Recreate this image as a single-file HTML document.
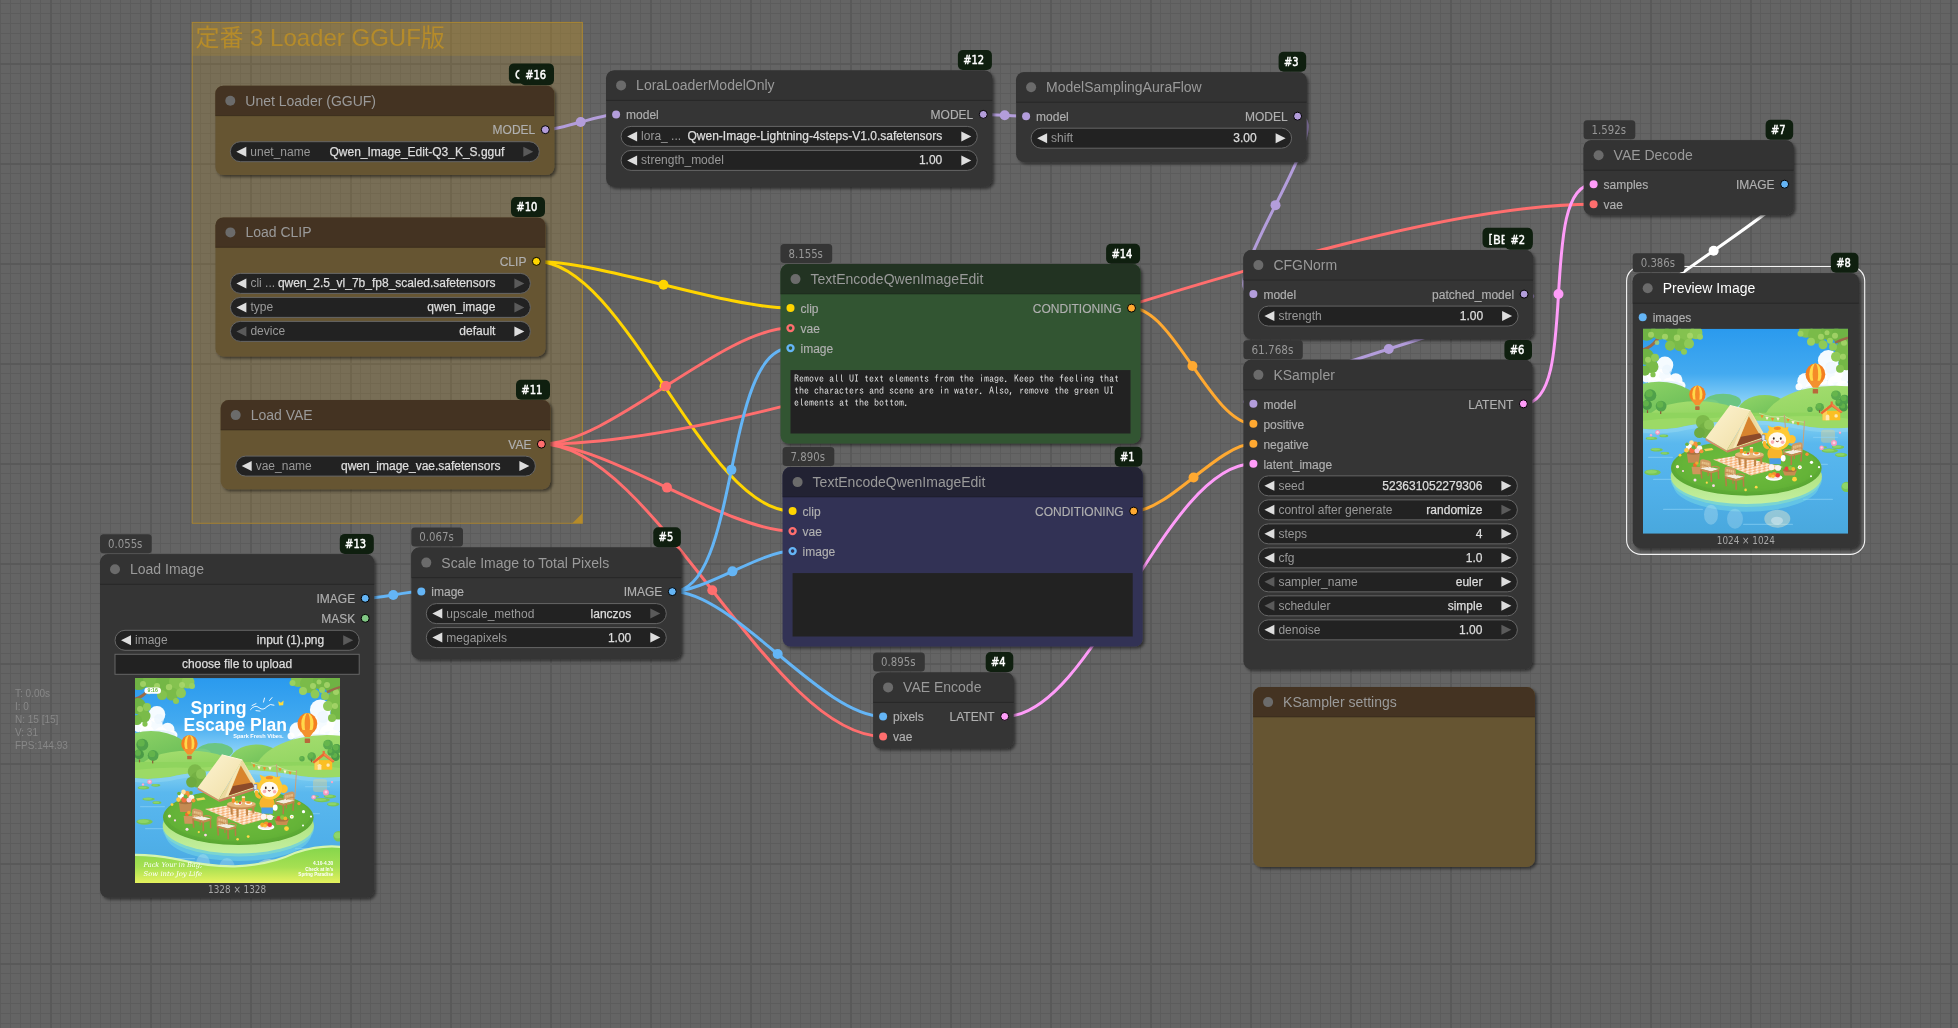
<!DOCTYPE html>
<html lang="ja"><head><meta charset="utf-8"><title>ComfyUI</title>
<style>
html,body{margin:0;padding:0;background:#636363;overflow:hidden}
svg{display:block;will-change:transform}
text{font-family:"Liberation Sans", sans-serif;font-size:12px}
.tt{font-size:14px}
.sl{fill:#b0b0b0;stroke:#b0b0b0;stroke-width:0.15px}
.sr{fill:#b0b0b0;text-anchor:end;stroke:#b0b0b0;stroke-width:0.15px}
.wl{fill:#999999}
.wv{fill:#dddddd;text-anchor:end;stroke:#dddddd;stroke-width:0.25px}
.wb{fill:#dddddd;text-anchor:middle;stroke:#dddddd;stroke-width:0.25px}
.ta{font-family:IPAGothic, "Liberation Mono", monospace;font-size:10px;fill:#dddddd;white-space:pre}
.tb{font-family:"DejaVu Sans Condensed", "DejaVu Sans", sans-serif;font-size:12px;fill:#979797}
.bd{font-family:"DejaVu Sans Condensed", "DejaVu Sans", sans-serif;font-size:12.5px;fill:#ffffff;stroke:#ffffff;stroke-width:0.5px}
.bd2{font-family:"DejaVu Sans Condensed", "DejaVu Sans", sans-serif;font-size:12.5px;fill:#ffffff;stroke:#ffffff;stroke-width:0.35px}
.cap{font-family:"DejaVu Sans Condensed", "DejaVu Sans", sans-serif;font-size:10px;fill:#a8a8a8;text-anchor:middle}
.st{font-size:10px;fill:#888888}
.gt{font-family:"Liberation Sans","Noto Sans CJK JP",sans-serif;font-size:24px;fill:#b58b2a}
</style></head><body>
<svg width="1958" height="1028" viewBox="0 0 1958 1028">
<defs>
<pattern id="grid" x="50" y="63" width="100" height="100" patternUnits="userSpaceOnUse">
<rect width="100" height="100" fill="#646464"/>
<path d="M10.5 0V100M20.5 0V100M30.5 0V100M40.5 0V100M50.5 0V100M60.5 0V100M70.5 0V100M80.5 0V100M90.5 0V100M0 10.5H100M0 20.5H100M0 30.5H100M0 40.5H100M0 50.5H100M0 60.5H100M0 70.5H100M0 80.5H100M0 90.5H100" stroke="#5c5c5c" stroke-width="1" fill="none"/>
<path d="M1 0V100M0 1H100" stroke="#595959" stroke-width="2" fill="none"/>
</pattern>
<filter id="sh" x="-5%" y="-5%" width="112%" height="115%"><feDropShadow dx="2" dy="2" stdDeviation="1.5" flood-color="#000" flood-opacity="0.5"/></filter>
<linearGradient id="gSky" x1="0" y1="0" x2="0" y2="1"><stop offset="0" stop-color="#2a9aee"/><stop offset="0.45" stop-color="#43aaf0"/><stop offset="0.75" stop-color="#8ed3f8"/><stop offset="1" stop-color="#b5e4fb"/></linearGradient>
<linearGradient id="gWater" x1="0" y1="0" x2="0" y2="1"><stop offset="0" stop-color="#86d2f2"/><stop offset="0.2" stop-color="#5ab8ee"/><stop offset="0.6" stop-color="#50b0ea"/><stop offset="1" stop-color="#49a8dd"/></linearGradient>
<linearGradient id="gHillA" x1="0" y1="0" x2="0.35" y2="1"><stop offset="0" stop-color="#a6de70"/><stop offset="0.6" stop-color="#8ed35f"/><stop offset="1" stop-color="#7cc856"/></linearGradient>
<linearGradient id="gHillB" x1="0" y1="0" x2="0.6" y2="1"><stop offset="0" stop-color="#93d668"/><stop offset="0.7" stop-color="#6fc05a"/><stop offset="1" stop-color="#62b752"/></linearGradient>
<radialGradient id="gGrass" cx="0.5" cy="0.45" r="0.6"><stop offset="0" stop-color="#7ac545"/><stop offset="0.7" stop-color="#64b238"/><stop offset="1" stop-color="#53a02f"/></radialGradient>
<linearGradient id="gRim" x1="0" y1="0" x2="0" y2="1"><stop offset="0" stop-color="#9fdc6a"/><stop offset="1" stop-color="#c4efa0"/></linearGradient>
<linearGradient id="gTent" x1="0" y1="0" x2="1" y2="1"><stop offset="0" stop-color="#fdf4d2"/><stop offset="1" stop-color="#f0dea6"/></linearGradient>
<linearGradient id="gWave" x1="0" y1="0" x2="0" y2="1"><stop offset="0" stop-color="#86d64c"/><stop offset="0.55" stop-color="#a6e052"/><stop offset="1" stop-color="#e6f25e"/></linearGradient>
<pattern id="pChk" width="5" height="5" patternUnits="userSpaceOnUse" patternTransform="rotate(18) skewX(-35)"><rect width="5" height="5" fill="#fdebd8"/><rect width="2.5" height="2.5" fill="#f6b47c"/><rect x="2.5" y="2.5" width="2.5" height="2.5" fill="#f6b47c"/></pattern>
<clipPath id="cScene"><rect width="205" height="205"/></clipPath>
<g id="scene" clip-path="url(#cScene)">
<rect width="205" height="100" fill="url(#gSky)"/>
<circle cx="21.9" cy="36.3" r="8.4" fill="#ffffff" opacity="0.95"/>
<circle cx="10" cy="44.9" r="6.8" fill="#ffffff" opacity="0.95"/>
<circle cx="32.7" cy="51.4" r="6.8" fill="#ffffff" opacity="0.95"/>
<circle cx="3.5" cy="48.2" r="5.6" fill="#ffffff" opacity="0.95"/>
<circle cx="20" cy="48" r="8" fill="#ffffff" opacity="0.95"/>
<circle cx="12" cy="54" r="7" fill="#ffffff" opacity="0.95"/>
<circle cx="26" cy="56" r="7" fill="#ffffff" opacity="0.95"/>
<circle cx="38" cy="57" r="4.5" fill="#ffffff" opacity="0.95"/>
<circle cx="185.4" cy="31.9" r="10.5" fill="#ffffff" opacity="0.95"/>
<circle cx="162.6" cy="52.5" r="8.3" fill="#ffffff" opacity="0.95"/>
<circle cx="199.4" cy="47.1" r="8" fill="#ffffff" opacity="0.95"/>
<circle cx="175.6" cy="50.3" r="9" fill="#ffffff" opacity="0.95"/>
<circle cx="190" cy="44" r="10" fill="#ffffff" opacity="0.95"/>
<circle cx="168" cy="60" r="6" fill="#ffffff" opacity="0.95"/>
<circle cx="184" cy="60" r="8" fill="#ffffff" opacity="0.95"/>
<circle cx="200" cy="60" r="8" fill="#ffffff" opacity="0.95"/>
<circle cx="156" cy="58" r="3.5" fill="#ffffff" opacity="0.95"/>
<circle cx="192" cy="54" r="7" fill="#ffffff" opacity="0.95"/>
<ellipse cx="22" cy="57" rx="18" ry="5" fill="#e2f1fd" opacity="0.8"/>
<ellipse cx="182" cy="62" rx="24" ry="6" fill="#e2f1fd" opacity="0.8"/>
<circle cx="24" cy="41" r="5" fill="#eaf5fe" opacity="0.7"/>
<circle cx="188" cy="39" r="6" fill="#eaf5fe" opacity="0.7"/>
<ellipse cx="80" cy="73" rx="18" ry="8" fill="#6cc582"/>
<ellipse cx="66" cy="75" rx="10" ry="4.5" fill="#78cc84"/>
<ellipse cx="16" cy="80" rx="42" ry="27" fill="url(#gHillB)"/>
<ellipse cx="121.5" cy="86" rx="28" ry="19.6" fill="url(#gHillB)"/>
<ellipse cx="192" cy="95" rx="72" ry="38" fill="url(#gHillA)"/>
<ellipse cx="54" cy="92" rx="50" ry="19.4" fill="url(#gHillA)"/>
<path d="M0 84H205V99Q180 101 160 97Q130 91 100 92Q60 93 35 99Q15 102 0 100Z" fill="#8fd45e"/>
<path d="M0 92Q30 88 60 90Q100 86 140 88Q180 86 205 90V99Q180 101 160 97Q130 91 100 92Q60 93 35 99Q15 102 0 100Z" fill="#a0dc6a" opacity="0.75"/>
<circle cx="7.3" cy="66.6" r="6" fill="#4fa04a"/>
<circle cx="6.1" cy="64.8" r="3.6" fill="#6bbb4c" opacity="0.7"/>
<circle cx="4" cy="76.3" r="4.9" fill="#4a9a46"/>
<circle cx="3.02" cy="74.83" r="2.94" fill="#6bbb4c" opacity="0.7"/>
<circle cx="18.1" cy="77.4" r="5.4" fill="#52a44c"/>
<circle cx="17.02" cy="75.78" r="3.24" fill="#6bbb4c" opacity="0.7"/>
<circle cx="193" cy="66.6" r="4.9" fill="#5aaa4e"/>
<circle cx="192.02" cy="65.13" r="2.94" fill="#6bbb4c" opacity="0.7"/>
<circle cx="201.6" cy="70.9" r="4.9" fill="#4fa04a"/>
<circle cx="200.62" cy="69.43" r="2.94" fill="#6bbb4c" opacity="0.7"/>
<circle cx="176.7" cy="78.5" r="4.3" fill="#5aaa4e"/>
<circle cx="175.84" cy="77.21" r="2.58" fill="#6bbb4c" opacity="0.7"/>
<circle cx="200.5" cy="78.5" r="4.3" fill="#4a9a46"/>
<circle cx="199.64" cy="77.21" r="2.58" fill="#6bbb4c" opacity="0.7"/>
<circle cx="167" cy="80.7" r="2.7" fill="#5aaa4e"/>
<circle cx="166.46" cy="79.89" r="1.62" fill="#6bbb4c" opacity="0.7"/>
<circle cx="196" cy="74" r="3.6" fill="#4fa04a"/>
<circle cx="195.28" cy="72.92" r="2.16" fill="#6bbb4c" opacity="0.7"/>
<rect x="17.1" y="82.5" width="1.2" height="2.8" fill="#8a5a35"/>
<rect x="3.9" y="81.5" width="1.2" height="2.8" fill="#8a5a35"/>
<rect x="175.9" y="81.3" width="1.2" height="2.8" fill="#8a5a35"/>
<path d="M179.6 82L197.2 82L197.2 91.6L179.6 91.6Z" fill="#fbbf24"/>
<path d="M179.6 82L184 78L184 91.6L179.6 91.6Z" fill="#fbd057"/>
<path d="M177.2 84L188.9 74.5L199.6 83L198 84.6L188.9 78L179 85.5Z" fill="#e96a32"/>
<path d="M188.9 74.5L199.6 83L197 83.5L188.9 77Z" fill="#f2854a"/>
<rect x="187.6" y="72.8" width="2.2" height="3" fill="#e7733a"/>
<path d="M182.7 91.6V87.2Q184.5 84.6 186.4 87.2V91.6Z" fill="#ffe9b4"/>
<rect x="191.5" y="85.5" width="3.2" height="3.2" rx="1.2" fill="#ffe9b4"/>
<g><ellipse cx="54.4" cy="65.6" rx="8.2" ry="8.7" fill="#f47f20"/><ellipse cx="54.4" cy="65.6" rx="5.08" ry="8.7" fill="#ffd84a"/><ellipse cx="54.4" cy="65.6" rx="2.3" ry="8.7" fill="#f58a28"/><path d="M48.25 70.82L60.55 70.82L56.45 76.47L52.35 76.47Z" fill="#f3912f"/><rect x="52.19" y="77.61" width="4.43" height="3.65" rx="0.6" fill="#b9683a"/></g>
<g><ellipse cx="172.4" cy="45.6" rx="9.9" ry="10.7" fill="#f47f20"/><ellipse cx="172.4" cy="45.6" rx="6.14" ry="10.7" fill="#ffd84a"/><ellipse cx="172.4" cy="45.6" rx="2.77" ry="10.7" fill="#f58a28"/><path d="M164.97 52.02L179.83 52.02L174.88 58.98L169.93 58.98Z" fill="#f3912f"/><rect x="169.73" y="60.37" width="5.35" height="4.49" rx="0.6" fill="#b9683a"/></g>
<path d="M0 100Q15 102 35 99Q60 93 100 92Q130 91 160 97Q180 101 205 99V205H0Z" fill="url(#gWater)"/>
<path d="M0 100Q15 102 35 99Q60 93 100 92Q130 91 160 97Q180 101 205 99V103Q180 105 160 101Q130 95 100 96Q60 97 35 103Q15 106 0 104Z" fill="#8fd6f2" opacity="0.6"/>
<rect x="178" y="101" width="14" height="13" rx="3" fill="#f3d27a" opacity="0.35"/>
<rect x="10" y="150" width="30" height="1.2" rx="0.6" fill="#8ed4f5" opacity="0.55"/>
<rect x="150" y="135" width="35" height="1.2" rx="0.6" fill="#8ed4f5" opacity="0.55"/>
<rect x="160" y="170" width="30" height="1.2" rx="0.6" fill="#8ed4f5" opacity="0.55"/>
<rect x="20" y="180" width="40" height="1.2" rx="0.6" fill="#8ed4f5" opacity="0.55"/>
<rect x="100" y="195" width="50" height="1.2" rx="0.6" fill="#8ed4f5" opacity="0.55"/>
<rect x="170" y="108" width="25" height="1.2" rx="0.6" fill="#8ed4f5" opacity="0.55"/>
<rect x="5" y="128" width="25" height="1.2" rx="0.6" fill="#8ed4f5" opacity="0.55"/>
<ellipse cx="9.5" cy="143.7" rx="8.2" ry="2.9" fill="#78c657"/>
<ellipse cx="8.27" cy="143.12" rx="5.74" ry="1.74" fill="#93d86b" opacity="0.8"/>
<ellipse cx="13.6" cy="121" rx="6.2" ry="1.7" fill="#78c657"/>
<ellipse cx="12.67" cy="120.66" rx="4.34" ry="1.02" fill="#93d86b" opacity="0.8"/>
<ellipse cx="21.9" cy="124.6" rx="4.5" ry="1.4" fill="#78c657"/>
<ellipse cx="21.22" cy="124.32" rx="3.15" ry="0.84" fill="#93d86b" opacity="0.8"/>
<ellipse cx="8.5" cy="109.7" rx="5.8" ry="1.7" fill="#78c657"/>
<ellipse cx="7.63" cy="109.36" rx="4.06" ry="1.02" fill="#93d86b" opacity="0.8"/>
<ellipse cx="20.8" cy="107.2" rx="4.5" ry="1.4" fill="#78c657"/>
<ellipse cx="20.12" cy="106.92" rx="3.15" ry="0.84" fill="#93d86b" opacity="0.8"/>
<ellipse cx="186.8" cy="122" rx="8.2" ry="2.1" fill="#78c657"/>
<ellipse cx="185.57" cy="121.58" rx="5.74" ry="1.26" fill="#93d86b" opacity="0.8"/>
<ellipse cx="198.2" cy="126.2" rx="6.2" ry="2.1" fill="#78c657"/>
<ellipse cx="197.27" cy="125.78" rx="4.34" ry="1.26" fill="#93d86b" opacity="0.8"/>
<ellipse cx="195" cy="118.4" rx="6.2" ry="1.9" fill="#78c657"/>
<ellipse cx="194.07" cy="118.02" rx="4.34" ry="1.14" fill="#93d86b" opacity="0.8"/>
<ellipse cx="203.5" cy="158.2" rx="5.2" ry="5.2" fill="#78c657"/>
<ellipse cx="202.72" cy="157.16" rx="3.64" ry="3.12" fill="#93d86b" opacity="0.8"/>
<ellipse cx="181" cy="118.5" rx="3" ry="1" fill="#78c657"/>
<ellipse cx="180.55" cy="118.3" rx="2.1" ry="0.6" fill="#93d86b" opacity="0.8"/>
<circle cx="14.6" cy="103.8" r="2.4" fill="#f49ac0"/>
<circle cx="14.6" cy="103.5" r="1.2" fill="#fbd0e2"/>
<circle cx="191" cy="114.3" r="3" fill="#f49ac0"/>
<circle cx="191" cy="114" r="1.5" fill="#fbd0e2"/>
<circle cx="178.6" cy="119.2" r="2.3" fill="#f49ac0"/>
<circle cx="178.6" cy="118.9" r="1.15" fill="#fbd0e2"/>
<circle cx="8" cy="106.5" r="1.3" fill="#f49ac0"/>
<circle cx="8" cy="106.2" r="0.65" fill="#fbd0e2"/>
<circle cx="197" cy="104" r="1.2" fill="#f49ac0"/>
<circle cx="197" cy="103.7" r="0.6" fill="#fbd0e2"/>
<ellipse cx="103.3" cy="156" rx="73" ry="27" fill="#7fe0e6" opacity="0.45"/>
<ellipse cx="103.3" cy="150.5" rx="75.6" ry="27.8" fill="#8fe3c0" opacity="0.55"/>
<ellipse cx="103.3" cy="147.6" rx="75.6" ry="27.8" fill="url(#gRim)"/>
<ellipse cx="103.3" cy="139.2" rx="75.3" ry="27.8" fill="url(#gGrass)"/>
<ellipse cx="103.3" cy="137.5" rx="72" ry="25.5" fill="#66b638" opacity="0.5"/>
<ellipse cx="134.3" cy="190" rx="13" ry="9" fill="#fdf1c8" opacity="0.4"/>
<ellipse cx="134" cy="192" rx="6" ry="4" fill="#ffffff" opacity="0.35"/>
<ellipse cx="68" cy="186" rx="7" ry="10" fill="#bfe6f2" opacity="0.35"/>
<ellipse cx="92" cy="190" rx="8" ry="10" fill="#bfe6f2" opacity="0.3"/>
<circle cx="60" cy="93.4" r="7.2" fill="#7cb94a"/>
<circle cx="63.5" cy="101.5" r="8.2" fill="#74b044"/>
<circle cx="56.5" cy="104" r="5.4" fill="#6daa40"/>
<circle cx="66" cy="96" r="5" fill="#8bc556"/>
<path d="M62.7 109.3L83.7 121.7L84.5 124L62.5 111.5Z" fill="#d9906a"/>
<path d="M83.7 121.7L122.9 108.7L123.5 110.8L84.5 124Z" fill="#c97f5c"/>
<path d="M86.8 76.7L107.4 81.9L83.7 121.7L62.7 109.3Z" fill="url(#gTent)"/>
<path d="M107.4 81.9L122.9 108.7L83.7 121.7Z" fill="#ecd9a0"/>
<path d="M105.8 87.5L118.5 109L93.5 117.5Z" fill="#d8842e"/>
<path d="M98 108L117 104.5L119.5 108.8L93.5 117.5Z" fill="#8c4a2a"/>
<path d="M107.4 81.9L101 98L93 118L90 119.5L98 98Z" fill="#f6e8b8"/>
<path d="M107.4 81.9L114 97L121 109L123 108.6L115 95Z" fill="#f3e2ac"/>
<path d="M86.8 76.7L107.4 81.9" stroke="#fff6d8" stroke-width="1" fill="none"/>
<path d="M116 84.5Q129 90 141.5 87.5Q150 93 161.2 93.5" stroke="#efe6cf" stroke-width="0.5" fill="none"/>
<path d="M141.3 86L142.5 100M161.5 92L159.8 119" stroke="#c9a27a" stroke-width="1" fill="none"/>
<path d="M117.4 86.2L120.6 86.5L119 89.8Z" fill="#f28a2e"/>
<path d="M122.4 88L125.6 88.3L124 91.6Z" fill="#fff4dc"/>
<path d="M127.9 89L131.1 89.3L129.5 92.6Z" fill="#f28a2e"/>
<path d="M133.4 88.8L136.6 89.1L135 92.4Z" fill="#fff4dc"/>
<path d="M143.4 90L146.6 90.3L145 93.6Z" fill="#f28a2e"/>
<path d="M148.4 92.2L151.6 92.5L150 95.8Z" fill="#fff4dc"/>
<path d="M153.4 93.4L156.6 93.7L155 97Z" fill="#f28a2e"/>
<path d="M43.8 124.5L57 124.5L55.8 134L45.2 134Z" fill="#c48a52"/>
<ellipse cx="50.4" cy="124.5" rx="6.6" ry="1.6" fill="#a8733f"/>
<circle cx="46" cy="118" r="3" fill="#ffffff"/>
<circle cx="52" cy="116" r="3.2" fill="#f7923a"/>
<circle cx="56.5" cy="119.5" r="2.8" fill="#fff6e0"/>
<circle cx="49" cy="121.5" r="2.8" fill="#f36f3f"/>
<circle cx="54" cy="122" r="2.5" fill="#ffd2e0"/>
<circle cx="43.5" cy="121.5" r="2.3" fill="#ffc94a"/>
<circle cx="48.5" cy="113.8" r="2.3" fill="#ffe2a0"/>
<circle cx="58.5" cy="122.5" r="2" fill="#f7923a"/>
<circle cx="50.5" cy="118.5" r="2" fill="#6bb23e"/>
<circle cx="44" cy="115.5" r="1.8" fill="#6bb23e"/>
<circle cx="56" cy="114.8" r="1.8" fill="#6bb23e"/>
<path d="M48.6 138L59.4 138L58.6 145.6L49.6 145.6Z" fill="#cf965c"/>
<circle cx="52" cy="136.2" r="2" fill="#f26a2e"/>
<circle cx="55.5" cy="135.8" r="2" fill="#7cc043"/>
<circle cx="53.8" cy="134.4" r="1.7" fill="#f6a72e"/>
<path d="M61 120.3L69 119.2L70.5 121.3L62.5 122.6Z" fill="#f7d45a"/>
<path d="M70 130.9L94 127.1L140 138.4L108 146.9Z" fill="url(#pChk)"/>
<g transform="translate(160 113.2) scale(-1 1)"><path d="M0.5 3Q0.5 0 3.5 0.3L9 1.6Q11.5 2.2 11.5 5V12.5L0.5 9.5Z" fill="#cf9a62"/><path d="M2.2 2.6L9.8 4.2V11L2.2 8.8Z" fill="#e8c48c"/><path d="M4.2 3V9.4M6.2 3.4V10M8.2 3.9V10.5M2.2 5L9.8 6.8M2.2 7L9.8 9" stroke="#cf9a62" stroke-width="0.5" fill="none"/><path d="M0.5 9.5L11.5 12.5L19.5 10.2L9 7.8Z" fill="#f4ece0"/><path d="M0.5 9.5L11.5 12.5L19.5 10.2V12.2L11.5 14.6L0.5 11.5Z" fill="#c48a50"/><path d="M0.5 6.5Q3 5 9 8.2" stroke="#c48a50" stroke-width="1" fill="none"/><path d="M11.5 8.5Q15 6.2 19.5 8.6V10.4" stroke="#c48a50" stroke-width="1.1" fill="none"/><path d="M0.7 11H2.3L2.8 19.5H1.3ZM10.7 14H12.4L12.6 23H11ZM18 12H19.5L19.8 20H18.3ZM8 12.8H9.2V17H8Z" fill="#b77c45"/></g>
<g transform="translate(56.6 130.2) scale(1 1)"><path d="M0.5 3Q0.5 0 3.5 0.3L9 1.6Q11.5 2.2 11.5 5V12.5L0.5 9.5Z" fill="#cf9a62"/><path d="M2.2 2.6L9.8 4.2V11L2.2 8.8Z" fill="#e8c48c"/><path d="M4.2 3V9.4M6.2 3.4V10M8.2 3.9V10.5M2.2 5L9.8 6.8M2.2 7L9.8 9" stroke="#cf9a62" stroke-width="0.5" fill="none"/><path d="M0.5 9.5L11.5 12.5L19.5 10.2L9 7.8Z" fill="#f4ece0"/><path d="M0.5 9.5L11.5 12.5L19.5 10.2V12.2L11.5 14.6L0.5 11.5Z" fill="#c48a50"/><path d="M0.5 6.5Q3 5 9 8.2" stroke="#c48a50" stroke-width="1" fill="none"/><path d="M11.5 8.5Q15 6.2 19.5 8.6V10.4" stroke="#c48a50" stroke-width="1.1" fill="none"/><path d="M0.7 11H2.3L2.8 19.5H1.3ZM10.7 14H12.4L12.6 23H11ZM18 12H19.5L19.8 20H18.3ZM8 12.8H9.2V17H8Z" fill="#b77c45"/></g>
<g transform="translate(81.2 137.6) scale(1.02 1.02)"><path d="M0.5 3Q0.5 0 3.5 0.3L9 1.6Q11.5 2.2 11.5 5V12.5L0.5 9.5Z" fill="#cf9a62"/><path d="M2.2 2.6L9.8 4.2V11L2.2 8.8Z" fill="#e8c48c"/><path d="M4.2 3V9.4M6.2 3.4V10M8.2 3.9V10.5M2.2 5L9.8 6.8M2.2 7L9.8 9" stroke="#cf9a62" stroke-width="0.5" fill="none"/><path d="M0.5 9.5L11.5 12.5L19.5 10.2L9 7.8Z" fill="#f4ece0"/><path d="M0.5 9.5L11.5 12.5L19.5 10.2V12.2L11.5 14.6L0.5 11.5Z" fill="#c48a50"/><path d="M0.5 6.5Q3 5 9 8.2" stroke="#c48a50" stroke-width="1" fill="none"/><path d="M11.5 8.5Q15 6.2 19.5 8.6V10.4" stroke="#c48a50" stroke-width="1.1" fill="none"/><path d="M0.7 11H2.3L2.8 19.5H1.3ZM10.7 14H12.4L12.6 23H11ZM18 12H19.5L19.8 20H18.3ZM8 12.8H9.2V17H8Z" fill="#b77c45"/></g>
<path d="M95.2 128.5H97.4L97.8 136.5H95.8ZM101.4 130H103.6L103.6 139.2H101.6ZM117 128.5H119.2L119.4 135.3H117.4ZM111 130H113V137.4H111.2Z" fill="#c28446"/>
<ellipse cx="106.4" cy="127.6" rx="14.4" ry="3.6" fill="#c78b4e"/>
<ellipse cx="106.4" cy="126" rx="14.4" ry="3.3" fill="#e6b67a"/>
<rect x="96.8" y="118.8" width="3.3" height="5.8" rx="0.8" fill="#f58f2c"/><rect x="96.8" y="118.8" width="3.3" height="1.6" rx="0.6" fill="#ffe8c8"/><rect x="106.8" y="118.2" width="3.3" height="5.8" rx="0.8" fill="#f7a13a"/><rect x="106.8" y="118.2" width="3.3" height="1.6" rx="0.6" fill="#ffe8c8"/>
<ellipse cx="103" cy="125.2" rx="3.8" ry="1.5" fill="#ffffff"/>
<circle cx="102" cy="123.8" r="1.5" fill="#f2b62e"/>
<circle cx="104.2" cy="123.6" r="1.5" fill="#8bc540"/>
<circle cx="105" cy="124.8" r="1.1" fill="#e8453a"/>
<ellipse cx="113.5" cy="125.4" rx="3.6" ry="1.4" fill="#ffffff"/>
<ellipse cx="113.5" cy="124.5" rx="2.4" ry="1.2" fill="#f58f2c"/>
<path d="M124.5 96.5L127.2 104L133 100.2Z" fill="#ffc832"/>
<path d="M145.5 98L137.5 100.5L143.5 105.5Z" fill="#ffc832"/>
<circle cx="148.6" cy="110.6" r="4.2" fill="#ffc22e"/>
<circle cx="122.2" cy="107.5" r="3.4" fill="#ffc22e"/>
<ellipse cx="132" cy="125.2" rx="7.6" ry="8" fill="#f9b42c"/>
<path d="M126.3 129.5L138.2 129.5L137.8 135.6L126.6 135.6Z" fill="#4b9ee2"/>
<ellipse cx="128.6" cy="138.6" rx="2.8" ry="3" fill="#fbf3ee"/>
<ellipse cx="135" cy="139.2" rx="3" ry="2.8" fill="#fbf3ee"/>
<ellipse cx="140.2" cy="129.5" rx="2.4" ry="3.2" fill="#ffffff"/>
<circle cx="135.3" cy="109.3" r="12" fill="#ffca36"/>
<ellipse cx="134.3" cy="111.2" rx="8.9" ry="7.6" fill="#fffaf2"/>
<circle cx="129.5" cy="113.4" r="1.8" fill="#f9a0a8" opacity="0.85"/>
<circle cx="139.6" cy="113.6" r="1.8" fill="#f9a0a8" opacity="0.85"/>
<ellipse cx="130.8" cy="109.8" rx="0.9" ry="1.3" fill="#3b2a22"/>
<ellipse cx="137.8" cy="109.9" rx="0.9" ry="1.3" fill="#3b2a22"/>
<path d="M132.8 112.2Q134.3 114 135.8 112.2" stroke="#5a2f22" stroke-width="0.6" fill="#e8645a"/>
<ellipse cx="134.4" cy="99.6" rx="3.6" ry="1.6" fill="#f58a28"/>
<rect x="118.6" y="105.8" width="3.6" height="6.4" rx="0.8" fill="#6b7fa8"/><rect x="119.2" y="106.6" width="2.4" height="4.6" fill="#dfe8f5"/>
<circle cx="121.5" cy="113.5" r="2.2" fill="#fffaf2"/>
<path d="M124.5 119Q121 118 121.5 114" stroke="#f9b42c" stroke-width="3.2" fill="none" stroke-linecap="round"/>
<ellipse cx="131" cy="148.8" rx="8.4" ry="3.2" fill="#ffffff"/>
<ellipse cx="131" cy="148.3" rx="6.6" ry="2.2" fill="#f1e7e2"/>
<circle cx="127.5" cy="146.6" r="2.3" fill="#f7a928"/>
<circle cx="131.2" cy="145.8" r="2.5" fill="#f58f2c"/>
<circle cx="134.8" cy="146.6" r="2.2" fill="#ea3f3a"/>
<circle cx="130" cy="147.6" r="1.8" fill="#fbc13a"/>
<path d="M139.6 141.5L153.8 141.5L151.8 146.8L141.6 146.8Z" fill="#c98d50"/>
<ellipse cx="146.7" cy="141.5" rx="7.1" ry="1.9" fill="#a8733f"/>
<circle cx="143.6" cy="140" r="2.1" fill="#e8453a"/>
<circle cx="147.3" cy="139.4" r="2.2" fill="#8cc63f"/>
<circle cx="150.3" cy="140.3" r="1.9" fill="#f2b52e"/>
<circle cx="156.8" cy="138.6" r="2" fill="#ffffff"/>
<circle cx="151.5" cy="150.5" r="2.4" fill="#ffd43a"/>
<circle cx="34.5" cy="138" r="1.6" fill="#fff1d8"/>
<circle cx="52" cy="151.2" r="1.5" fill="#ffe1ee"/>
<circle cx="70.5" cy="157" r="1.4" fill="#ffd6ea"/>
<circle cx="102.6" cy="161.2" r="1.3" fill="#ffd84a"/>
<circle cx="113.2" cy="158.5" r="1.4" fill="#ffd84a"/>
<circle cx="168.5" cy="133.6" r="1.6" fill="#ffffff"/>
<circle cx="37" cy="126.5" r="1.4" fill="#ffd43a"/>
<circle cx="164" cy="125.5" r="1.7" fill="#f7923a"/>
<circle cx="176" cy="138.5" r="1.1" fill="#ffffff"/>
<circle cx="40" cy="142.3" r="1.1" fill="#ffd6ea"/>
<circle cx="63.8" cy="154" r="1.1" fill="#ffd84a"/>
<circle cx="168" cy="147.5" r="1" fill="#fff"/>
<circle cx="156.8" cy="138.6" r="0.8" fill="#ffd43a"/>
<path d="M0 21Q8 19 14 11Q17 6 22 3" stroke="#9a6a48" stroke-width="3" fill="none"/>
<circle cx="4" cy="3" r="9" fill="#6fb344"/>
<circle cx="17" cy="2" r="9" fill="#7abb49"/>
<circle cx="30" cy="5" r="9.5" fill="#74b746"/>
<circle cx="43" cy="4" r="9" fill="#84c24f"/>
<circle cx="53" cy="4" r="6.5" fill="#8fca57"/>
<circle cx="37" cy="16" r="6.5" fill="#7abb49"/>
<circle cx="46" cy="15" r="5" fill="#8fca57"/>
<circle cx="27" cy="17" r="5" fill="#84c24f"/>
<circle cx="57" cy="8" r="3" fill="#9ad160"/>
<circle cx="41" cy="23" r="3" fill="#8fca57"/>
<circle cx="3" cy="28" r="8" fill="#6fb344"/>
<circle cx="9" cy="38" r="6.5" fill="#7abb49"/>
<circle cx="2" cy="42" r="5" fill="#74b746"/>
<circle cx="12" cy="29" r="4" fill="#8fca57"/>
<circle cx="10" cy="46" r="2.6" fill="#84c24f"/>
<circle cx="163" cy="2" r="7" fill="#84c24f"/>
<circle cx="174" cy="6" r="9" fill="#7abb49"/>
<circle cx="187" cy="3" r="9" fill="#74b746"/>
<circle cx="199" cy="6" r="10" fill="#6fb344"/>
<circle cx="168" cy="13" r="4" fill="#9ad160"/>
<circle cx="180" cy="16" r="4.5" fill="#8fca57"/>
<circle cx="157.5" cy="5" r="3" fill="#9ad160"/>
<circle cx="201" cy="22" r="9" fill="#7abb49"/>
<circle cx="203" cy="34" r="7.5" fill="#74b746"/>
<circle cx="193" cy="28" r="5" fill="#8fca57"/>
<circle cx="197" cy="40" r="4" fill="#84c24f"/>
<circle cx="190" cy="18" r="4" fill="#8fca57"/>
<circle cx="187" cy="12" r="3" fill="#9ad160"/>
<circle cx="8" cy="6" r="3" fill="#add96f" opacity="0.75"/>
<circle cx="22" cy="8" r="3" fill="#add96f" opacity="0.75"/>
<circle cx="34" cy="9" r="3.2" fill="#add96f" opacity="0.75"/>
<circle cx="47" cy="7" r="3" fill="#add96f" opacity="0.75"/>
<circle cx="14" cy="14" r="2.4" fill="#add96f" opacity="0.75"/>
<circle cx="5" cy="31" r="3" fill="#add96f" opacity="0.75"/>
<circle cx="178" cy="8" r="3" fill="#add96f" opacity="0.75"/>
<circle cx="192" cy="7" r="3" fill="#add96f" opacity="0.75"/>
<circle cx="201" cy="14" r="3" fill="#add96f" opacity="0.75"/>
<circle cx="200" cy="28" r="3" fill="#add96f" opacity="0.75"/>
<circle cx="184" cy="4" r="2.5" fill="#add96f" opacity="0.75"/>
<path d="M205 9Q198 11 192 14" stroke="#9a6a48" stroke-width="2.4" fill="none"/>
</g>
</defs>
<rect width="1958" height="1028" fill="url(#grid)"/>

<rect x="192.2" y="22.4" width="390.2" height="500.9" fill="#b58b2a" fill-opacity="0.25"/>
<rect x="192.2" y="22.4" width="390.2" height="33.4" fill="#b58b2a" fill-opacity="0.25"/>
<rect x="192.2" y="22.4" width="390.2" height="500.9" fill="none" stroke="#b58b2a" stroke-width="1" stroke-opacity="0.8"/>
<path d="M582.4 523.3h-10l10 -10z" fill="#b58b2a"/>
<text x="195.4" y="46.4" class="gt">定番 3 Loader GGUF版</text>
<path d="M545.3 129.7C563.41 129.7 597.99 114.4 616.1 114.4" fill="none" stroke="#B39DDB" stroke-width="3"/>
<circle cx="580.7" cy="122.05" r="5" fill="#B39DDB"/>
<path d="M983.3 114.4C994.01 114.4 1015.39 116.2 1026.1 116.2" fill="none" stroke="#B39DDB" stroke-width="3"/>
<circle cx="1004.7" cy="115.3" r="5" fill="#B39DDB"/>
<path d="M1297.6 116.2C1343.43 116.2 1207.57 294.1 1253.4 294.1" fill="none" stroke="#B39DDB" stroke-width="3"/>
<circle cx="1275.5" cy="205.15" r="5" fill="#B39DDB"/>
<path d="M1524.1 294.1C1597.13 294.1 1180.37 403.85 1253.4 403.85" fill="none" stroke="#B39DDB" stroke-width="3"/>
<circle cx="1388.75" cy="348.98" r="5" fill="#B39DDB"/>
<path d="M536.4 261.4C600.99 261.4 725.91 308.1 790.5 308.1" fill="none" stroke="#FFD500" stroke-width="3"/>
<circle cx="663.45" cy="284.75" r="5" fill="#FFD500"/>
<path d="M536.4 261.4C625.84 261.4 703.16 511.1 792.6 511.1" fill="none" stroke="#FFD500" stroke-width="3"/>
<circle cx="664.5" cy="386.25" r="5" fill="#FFD500"/>
<path d="M541.4 444.1C610.1 444.1 721.8 328.1 790.5 328.1" fill="none" stroke="#FF6E6E" stroke-width="3"/>
<circle cx="665.95" cy="386.1" r="5" fill="#FF6E6E"/>
<path d="M541.4 444.1C607.86 444.1 726.14 531.1 792.6 531.1" fill="none" stroke="#FF6E6E" stroke-width="3"/>
<circle cx="667" cy="487.6" r="5" fill="#FF6E6E"/>
<path d="M541.4 444.1C653.82 444.1 770.68 736.4 883.1 736.4" fill="none" stroke="#FF6E6E" stroke-width="3"/>
<circle cx="712.25" cy="590.25" r="5" fill="#FF6E6E"/>
<path d="M541.4 444.1C811.2 444.1 1323.8 204.2 1593.6 204.2" fill="none" stroke="#FF6E6E" stroke-width="3"/>
<circle cx="1067.5" cy="324.15" r="5" fill="#FF6E6E"/>
<path d="M365.2 598.3C379.32 598.3 407.18 591.6 421.3 591.6" fill="none" stroke="#64B5F6" stroke-width="3"/>
<circle cx="393.25" cy="594.95" r="5" fill="#64B5F6"/>
<path d="M672.3 591.6C739.97 591.6 722.83 348.1 790.5 348.1" fill="none" stroke="#64B5F6" stroke-width="3"/>
<circle cx="731.4" cy="469.85" r="5" fill="#64B5F6"/>
<path d="M672.3 591.6C704.03 591.6 760.87 551.1 792.6 551.1" fill="none" stroke="#64B5F6" stroke-width="3"/>
<circle cx="732.45" cy="571.35" r="5" fill="#64B5F6"/>
<path d="M672.3 591.6C733.54 591.6 821.86 716.4 883.1 716.4" fill="none" stroke="#64B5F6" stroke-width="3"/>
<circle cx="777.7" cy="654" r="5" fill="#64B5F6"/>
<path d="M1131.5 308.1C1173.53 308.1 1211.37 423.85 1253.4 423.85" fill="none" stroke="#FFA931" stroke-width="3"/>
<circle cx="1192.45" cy="365.98" r="5" fill="#FFA931"/>
<path d="M1133.7 511.1C1168.02 511.1 1219.08 443.85 1253.4 443.85" fill="none" stroke="#FFA931" stroke-width="3"/>
<circle cx="1193.55" cy="477.48" r="5" fill="#FFA931"/>
<path d="M1004.7 716.4C1093.31 716.4 1164.79 463.85 1253.4 463.85" fill="none" stroke="#FF9CF9" stroke-width="3"/>
<circle cx="1129.05" cy="590.12" r="5" fill="#FF9CF9"/>
<path d="M1523.4 403.85C1581.05 403.85 1535.95 184.2 1593.6 184.2" fill="none" stroke="#FF9CF9" stroke-width="3"/>
<circle cx="1558.5" cy="294.02" r="5" fill="#FF9CF9"/>
<path d="M1784.6 184.2C1833.22 184.2 1594.08 317.2 1642.7 317.2" fill="none" stroke="#ffffff" stroke-width="3"/>
<circle cx="1713.65" cy="250.7" r="5" fill="#ffffff"/>
<g>
<path d="M223.3 85.7H546.3A8 8 0 0 1 554.3 93.7V167.1A8 8 0 0 1 546.3 175.1H223.3A8 8 0 0 1 215.3 167.1V93.7A8 8 0 0 1 223.3 85.7Z" fill="#665533" filter="url(#sh)"/>
<path d="M223.3 85.7H546.3A8 8 0 0 1 554.3 93.7V115.7H215.3V93.7A8 8 0 0 1 223.3 85.7Z" fill="#443322"/>
<rect x="215.3" y="115.1" width="339" height="1.2" fill="#000" fill-opacity="0.2"/>
<circle cx="230.3" cy="100.7" r="5" fill="#6b6b6b"/>
<text x="245.3" y="105.7" class="tt" fill="#9a9a9a">Unet Loader (GGUF)</text>
<circle cx="545.3" cy="129.7" r="4" fill="#B39DDB" stroke="#000" stroke-width="1"/>
<text x="535.3" y="134.2" class="sr">MODEL</text>
<rect x="230.3" y="141.7" width="309" height="20" rx="10" fill="#222222" stroke="#666666" stroke-width="1"/>
<path d="M246.3 146.7L236.3 151.7L246.3 156.7Z" fill="#dddddd"/>
<path d="M523.3 146.7L533.3 151.7L523.3 156.7Z" fill="#5a5a5a"/>
<text x="250.3" y="155.7" class="wl">unet_name</text>
<text x="504.3" y="155.7" class="wv">Qwen_Image_Edit-Q3_K_S.gguf</text>
<rect x="508.9" y="63.4" width="45" height="20" rx="5" fill="#0f1f0f"/>
<clipPath id="cb16"><rect x="508.9" y="62.7" width="10.5" height="22"/></clipPath>
<text x="514.9" y="79.1" class="bd2" clip-path="url(#cb16)" textLength="32.5" lengthAdjust="spacingAndGlyphs">GGUF</text>
<rect x="519.9" y="65.3" width="34" height="20" rx="5" fill="#0f1f0f"/>
<text x="525.2" y="79.3" class="bd" textLength="21" lengthAdjust="spacingAndGlyphs">#16</text>
</g>
<g>
<path d="M223.4 217.4H537.4A8 8 0 0 1 545.4 225.4V348.4A8 8 0 0 1 537.4 356.4H223.4A8 8 0 0 1 215.4 348.4V225.4A8 8 0 0 1 223.4 217.4Z" fill="#665533" filter="url(#sh)"/>
<path d="M223.4 217.4H537.4A8 8 0 0 1 545.4 225.4V247.4H215.4V225.4A8 8 0 0 1 223.4 217.4Z" fill="#443322"/>
<rect x="215.4" y="246.8" width="330" height="1.2" fill="#000" fill-opacity="0.2"/>
<circle cx="230.4" cy="232.4" r="5" fill="#6b6b6b"/>
<text x="245.4" y="237.4" class="tt" fill="#9a9a9a">Load CLIP</text>
<circle cx="536.4" cy="261.4" r="4" fill="#FFD500" stroke="#000" stroke-width="1"/>
<text x="526.4" y="265.9" class="sr">CLIP</text>
<rect x="230.4" y="273.4" width="300" height="20" rx="10" fill="#222222" stroke="#666666" stroke-width="1"/>
<path d="M246.4 278.4L236.4 283.4L246.4 288.4Z" fill="#dddddd"/>
<path d="M514.4 278.4L524.4 283.4L514.4 288.4Z" fill="#5a5a5a"/>
<text x="250.4" y="287.4" class="wl">cli ...</text>
<text x="495.4" y="287.4" class="wv">qwen_2.5_vl_7b_fp8_scaled.safetensors</text>
<rect x="230.4" y="297.4" width="300" height="20" rx="10" fill="#222222" stroke="#666666" stroke-width="1"/>
<path d="M246.4 302.4L236.4 307.4L246.4 312.4Z" fill="#dddddd"/>
<path d="M514.4 302.4L524.4 307.4L514.4 312.4Z" fill="#5a5a5a"/>
<text x="250.4" y="311.4" class="wl">type</text>
<text x="495.4" y="311.4" class="wv">qwen_image</text>
<rect x="230.4" y="321.4" width="300" height="20" rx="10" fill="#222222" stroke="#666666" stroke-width="1"/>
<path d="M246.4 326.4L236.4 331.4L246.4 336.4Z" fill="#5a5a5a"/>
<path d="M514.4 326.4L524.4 331.4L514.4 336.4Z" fill="#dddddd"/>
<text x="250.4" y="335.4" class="wl">device</text>
<text x="495.4" y="335.4" class="wv">default</text>
<rect x="511" y="197" width="34" height="20" rx="5" fill="#0f1f0f"/>
<text x="516.3" y="211" class="bd" textLength="21" lengthAdjust="spacingAndGlyphs">#10</text>
</g>
<g>
<path d="M228.7 400.1H542.4A8 8 0 0 1 550.4 408.1V481.3A8 8 0 0 1 542.4 489.3H228.7A8 8 0 0 1 220.7 481.3V408.1A8 8 0 0 1 228.7 400.1Z" fill="#665533" filter="url(#sh)"/>
<path d="M228.7 400.1H542.4A8 8 0 0 1 550.4 408.1V430.1H220.7V408.1A8 8 0 0 1 228.7 400.1Z" fill="#443322"/>
<rect x="220.7" y="429.5" width="329.7" height="1.2" fill="#000" fill-opacity="0.2"/>
<circle cx="235.7" cy="415.1" r="5" fill="#6b6b6b"/>
<text x="250.7" y="420.1" class="tt" fill="#9a9a9a">Load VAE</text>
<circle cx="541.4" cy="444.1" r="4" fill="#FF6E6E" stroke="#000" stroke-width="1"/>
<text x="531.4" y="448.6" class="sr">VAE</text>
<rect x="235.7" y="456.1" width="299.7" height="20" rx="10" fill="#222222" stroke="#666666" stroke-width="1"/>
<path d="M251.7 461.1L241.7 466.1L251.7 471.1Z" fill="#dddddd"/>
<path d="M519.4 461.1L529.4 466.1L519.4 471.1Z" fill="#dddddd"/>
<text x="255.7" y="470.1" class="wl">vae_name</text>
<text x="500.4" y="470.1" class="wv">qwen_image_vae.safetensors</text>
<rect x="516" y="379.7" width="34" height="20" rx="5" fill="#0f1f0f"/>
<text x="521.3" y="393.7" class="bd" textLength="21" lengthAdjust="spacingAndGlyphs">#11</text>
</g>
<g>
<path d="M614.1 70.4H984.3A8 8 0 0 1 992.3 78.4V178.9A8 8 0 0 1 984.3 186.9H614.1A8 8 0 0 1 606.1 178.9V78.4A8 8 0 0 1 614.1 70.4Z" fill="#353535" filter="url(#sh)"/>
<path d="M614.1 70.4H984.3A8 8 0 0 1 992.3 78.4V100.4H606.1V78.4A8 8 0 0 1 614.1 70.4Z" fill="#333333"/>
<rect x="606.1" y="99.8" width="386.2" height="1.2" fill="#000" fill-opacity="0.2"/>
<circle cx="621.1" cy="85.4" r="5" fill="#6b6b6b"/>
<text x="636.1" y="90.4" class="tt" fill="#9a9a9a">LoraLoaderModelOnly</text>
<circle cx="616.1" cy="114.4" r="4" fill="#B39DDB"/>
<text x="626.1" y="118.9" class="sl">model</text>
<circle cx="983.3" cy="114.4" r="4" fill="#B39DDB" stroke="#000" stroke-width="1"/>
<text x="973.3" y="118.9" class="sr">MODEL</text>
<rect x="621.1" y="126.4" width="356.2" height="20" rx="10" fill="#222222" stroke="#666666" stroke-width="1"/>
<path d="M637.1 131.4L627.1 136.4L637.1 141.4Z" fill="#dddddd"/>
<path d="M961.3 131.4L971.3 136.4L961.3 141.4Z" fill="#dddddd"/>
<text x="641.1" y="140.4" class="wl">lora_ ...</text>
<text x="942.3" y="140.4" class="wv">Qwen-Image-Lightning-4steps-V1.0.safetensors</text>
<rect x="621.1" y="150.4" width="356.2" height="20" rx="10" fill="#222222" stroke="#666666" stroke-width="1"/>
<path d="M637.1 155.4L627.1 160.4L637.1 165.4Z" fill="#dddddd"/>
<path d="M961.3 155.4L971.3 160.4L961.3 165.4Z" fill="#dddddd"/>
<text x="641.1" y="164.4" class="wl">strength_model</text>
<text x="942.3" y="164.4" class="wv">1.00</text>
<rect x="957.9" y="50" width="34" height="20" rx="5" fill="#0f1f0f"/>
<text x="963.2" y="64" class="bd" textLength="21" lengthAdjust="spacingAndGlyphs">#12</text>
</g>
<g>
<path d="M1024.1 72.2H1298.6A8 8 0 0 1 1306.6 80.2V154.2A8 8 0 0 1 1298.6 162.2H1024.1A8 8 0 0 1 1016.1 154.2V80.2A8 8 0 0 1 1024.1 72.2Z" fill="#353535" filter="url(#sh)"/>
<path d="M1024.1 72.2H1298.6A8 8 0 0 1 1306.6 80.2V102.2H1016.1V80.2A8 8 0 0 1 1024.1 72.2Z" fill="#333333"/>
<rect x="1016.1" y="101.6" width="290.5" height="1.2" fill="#000" fill-opacity="0.2"/>
<circle cx="1031.1" cy="87.2" r="5" fill="#6b6b6b"/>
<text x="1046.1" y="92.2" class="tt" fill="#9a9a9a">ModelSamplingAuraFlow</text>
<circle cx="1026.1" cy="116.2" r="4" fill="#B39DDB"/>
<text x="1036.1" y="120.7" class="sl">model</text>
<circle cx="1297.6" cy="116.2" r="4" fill="#B39DDB" stroke="#000" stroke-width="1"/>
<text x="1287.6" y="120.7" class="sr">MODEL</text>
<rect x="1031.1" y="128.2" width="260.5" height="20" rx="10" fill="#222222" stroke="#666666" stroke-width="1"/>
<path d="M1047.1 133.2L1037.1 138.2L1047.1 143.2Z" fill="#dddddd"/>
<path d="M1275.6 133.2L1285.6 138.2L1275.6 143.2Z" fill="#dddddd"/>
<text x="1051.1" y="142.2" class="wl">shift</text>
<text x="1256.6" y="142.2" class="wv">3.00</text>
<rect x="1278.6" y="51.8" width="27.6" height="20" rx="5" fill="#0f1f0f"/>
<text x="1283.9" y="65.8" class="bd" textLength="14.6" lengthAdjust="spacingAndGlyphs">#3</text>
</g>
<g>
<path d="M1591.6 140.2H1785.6A8 8 0 0 1 1793.6 148.2V207.2A8 8 0 0 1 1785.6 215.2H1591.6A8 8 0 0 1 1583.6 207.2V148.2A8 8 0 0 1 1591.6 140.2Z" fill="#353535" filter="url(#sh)"/>
<path d="M1591.6 140.2H1785.6A8 8 0 0 1 1793.6 148.2V170.2H1583.6V148.2A8 8 0 0 1 1591.6 140.2Z" fill="#333333"/>
<rect x="1583.6" y="169.6" width="210" height="1.2" fill="#000" fill-opacity="0.2"/>
<circle cx="1598.6" cy="155.2" r="5" fill="#6b6b6b"/>
<text x="1613.6" y="160.2" class="tt" fill="#9a9a9a">VAE Decode</text>
<circle cx="1593.6" cy="184.2" r="4" fill="#FF9CF9"/>
<text x="1603.6" y="188.7" class="sl">samples</text>
<circle cx="1593.6" cy="204.2" r="4" fill="#FF6E6E"/>
<text x="1603.6" y="208.7" class="sl">vae</text>
<circle cx="1784.6" cy="184.2" r="4" fill="#64B5F6" stroke="#000" stroke-width="1"/>
<text x="1774.6" y="188.7" class="sr">IMAGE</text>
<rect x="1583.6" y="120.2" width="51.7" height="19" rx="3.5" fill="#353535"/>
<text x="1591.6" y="134" class="tb" textLength="34.4" lengthAdjust="spacingAndGlyphs">1.592s</text>
<rect x="1765.6" y="119.8" width="27.6" height="20" rx="5" fill="#0f1f0f"/>
<text x="1770.9" y="133.8" class="bd" textLength="14.6" lengthAdjust="spacingAndGlyphs">#7</text>
</g>
<g>
<path d="M788.5 264.1H1132.5A8 8 0 0 1 1140.5 272.1V435.5A8 8 0 0 1 1132.5 443.5H788.5A8 8 0 0 1 780.5 435.5V272.1A8 8 0 0 1 788.5 264.1Z" fill="#335533" filter="url(#sh)"/>
<path d="M788.5 264.1H1132.5A8 8 0 0 1 1140.5 272.1V294.1H780.5V272.1A8 8 0 0 1 788.5 264.1Z" fill="#223322"/>
<rect x="780.5" y="293.5" width="360" height="1.2" fill="#000" fill-opacity="0.2"/>
<circle cx="795.5" cy="279.1" r="5" fill="#6b6b6b"/>
<text x="810.5" y="284.1" class="tt" fill="#9a9a9a">TextEncodeQwenImageEdit</text>
<circle cx="790.5" cy="308.1" r="4" fill="#FFD500"/>
<text x="800.5" y="312.6" class="sl">clip</text>
<circle cx="790.5" cy="328.1" r="3" fill="none" stroke="#FF6E6E" stroke-width="2.4"/>
<text x="800.5" y="332.6" class="sl">vae</text>
<circle cx="790.5" cy="348.1" r="3" fill="none" stroke="#64B5F6" stroke-width="2.4"/>
<text x="800.5" y="352.6" class="sl">image</text>
<circle cx="1131.5" cy="308.1" r="4" fill="#FFA931" stroke="#000" stroke-width="1"/>
<text x="1121.5" y="312.6" class="sr">CONDITIONING</text>
<rect x="790.5" y="370.1" width="340" height="63.4" fill="#222222"/>
<text x="794.1" y="381.7" class="ta">Remove all UI text elements from the image. Keep the feeling that</text>
<text x="794.1" y="393.7" class="ta">the characters and scene are in water. Also, remove the green UI</text>
<text x="794.1" y="405.7" class="ta">elements at the bottom.</text>
<rect x="780.5" y="244.1" width="51.7" height="19" rx="3.5" fill="#353535"/>
<text x="788.5" y="257.9" class="tb" textLength="34.4" lengthAdjust="spacingAndGlyphs">8.155s</text>
<rect x="1106.1" y="243.7" width="34" height="20" rx="5" fill="#0f1f0f"/>
<text x="1111.4" y="257.7" class="bd" textLength="21" lengthAdjust="spacingAndGlyphs">#14</text>
</g>
<g>
<path d="M790.6 467.1H1134.7A8 8 0 0 1 1142.7 475.1V638.5A8 8 0 0 1 1134.7 646.5H790.6A8 8 0 0 1 782.6 638.5V475.1A8 8 0 0 1 790.6 467.1Z" fill="#333355" filter="url(#sh)"/>
<path d="M790.6 467.1H1134.7A8 8 0 0 1 1142.7 475.1V497.1H782.6V475.1A8 8 0 0 1 790.6 467.1Z" fill="#222233"/>
<rect x="782.6" y="496.5" width="360.1" height="1.2" fill="#000" fill-opacity="0.2"/>
<circle cx="797.6" cy="482.1" r="5" fill="#6b6b6b"/>
<text x="812.6" y="487.1" class="tt" fill="#9a9a9a">TextEncodeQwenImageEdit</text>
<circle cx="792.6" cy="511.1" r="4" fill="#FFD500"/>
<text x="802.6" y="515.6" class="sl">clip</text>
<circle cx="792.6" cy="531.1" r="3" fill="none" stroke="#FF6E6E" stroke-width="2.4"/>
<text x="802.6" y="535.6" class="sl">vae</text>
<circle cx="792.6" cy="551.1" r="3" fill="none" stroke="#64B5F6" stroke-width="2.4"/>
<text x="802.6" y="555.6" class="sl">image</text>
<circle cx="1133.7" cy="511.1" r="4" fill="#FFA931" stroke="#000" stroke-width="1"/>
<text x="1123.7" y="515.6" class="sr">CONDITIONING</text>
<rect x="792.6" y="573.1" width="340.1" height="63.4" fill="#222222"/>
<rect x="782.6" y="447.1" width="51.7" height="19" rx="3.5" fill="#353535"/>
<text x="790.6" y="460.9" class="tb" textLength="34.4" lengthAdjust="spacingAndGlyphs">7.890s</text>
<rect x="1114.7" y="446.7" width="27.6" height="20" rx="5" fill="#0f1f0f"/>
<text x="1120" y="460.7" class="bd" textLength="14.6" lengthAdjust="spacingAndGlyphs">#1</text>
</g>
<g>
<path d="M1251.4 250.1H1525.1A8 8 0 0 1 1533.1 258.1V331.1A8 8 0 0 1 1525.1 339.1H1251.4A8 8 0 0 1 1243.4 331.1V258.1A8 8 0 0 1 1251.4 250.1Z" fill="#353535" filter="url(#sh)"/>
<path d="M1251.4 250.1H1525.1A8 8 0 0 1 1533.1 258.1V280.1H1243.4V258.1A8 8 0 0 1 1251.4 250.1Z" fill="#333333"/>
<rect x="1243.4" y="279.5" width="289.7" height="1.2" fill="#000" fill-opacity="0.2"/>
<circle cx="1258.4" cy="265.1" r="5" fill="#6b6b6b"/>
<text x="1273.4" y="270.1" class="tt" fill="#9a9a9a">CFGNorm</text>
<circle cx="1253.4" cy="294.1" r="4" fill="#B39DDB"/>
<text x="1263.4" y="298.6" class="sl">model</text>
<circle cx="1524.1" cy="294.1" r="4" fill="#B39DDB" stroke="#000" stroke-width="1"/>
<text x="1514.1" y="298.6" class="sr">patched_model</text>
<rect x="1258.4" y="306.1" width="259.7" height="20" rx="10" fill="#222222" stroke="#666666" stroke-width="1"/>
<path d="M1274.4 311.1L1264.4 316.1L1274.4 321.1Z" fill="#dddddd"/>
<path d="M1502.1 311.1L1512.1 316.1L1502.1 321.1Z" fill="#dddddd"/>
<text x="1278.4" y="320.1" class="wl">strength</text>
<text x="1483.1" y="320.1" class="wv">1.00</text>
<rect x="1482.5" y="227.8" width="50.2" height="20" rx="5" fill="#0f1f0f"/>
<clipPath id="cb2"><rect x="1482.5" y="227.1" width="22.1" height="22"/></clipPath>
<text x="1488.5" y="243.5" class="bd2" clip-path="url(#cb2)" textLength="37.7" lengthAdjust="spacingAndGlyphs">[BETA]</text>
<rect x="1505.1" y="229.7" width="27.6" height="20" rx="5" fill="#0f1f0f"/>
<text x="1510.4" y="243.7" class="bd" textLength="14.6" lengthAdjust="spacingAndGlyphs">#2</text>
</g>
<g>
<path d="M1251.4 359.85H1524.4A8 8 0 0 1 1532.4 367.85V661.35A8 8 0 0 1 1524.4 669.35H1251.4A8 8 0 0 1 1243.4 661.35V367.85A8 8 0 0 1 1251.4 359.85Z" fill="#353535" filter="url(#sh)"/>
<path d="M1251.4 359.85H1524.4A8 8 0 0 1 1532.4 367.85V389.85H1243.4V367.85A8 8 0 0 1 1251.4 359.85Z" fill="#333333"/>
<rect x="1243.4" y="389.25" width="289" height="1.2" fill="#000" fill-opacity="0.2"/>
<circle cx="1258.4" cy="374.85" r="5" fill="#6b6b6b"/>
<text x="1273.4" y="380.3" class="tt" fill="#9a9a9a">KSampler</text>
<circle cx="1253.4" cy="403.85" r="4" fill="#B39DDB"/>
<text x="1263.4" y="408.8" class="sl">model</text>
<circle cx="1253.4" cy="423.85" r="4" fill="#FFA931"/>
<text x="1263.4" y="428.8" class="sl">positive</text>
<circle cx="1253.4" cy="443.85" r="4" fill="#FFA931"/>
<text x="1263.4" y="448.8" class="sl">negative</text>
<circle cx="1253.4" cy="463.85" r="4" fill="#FF9CF9"/>
<text x="1263.4" y="468.8" class="sl">latent_image</text>
<circle cx="1523.4" cy="403.85" r="4" fill="#FF9CF9" stroke="#000" stroke-width="1"/>
<text x="1513.4" y="408.8" class="sr">LATENT</text>
<rect x="1258.4" y="475.85" width="259" height="20" rx="10" fill="#222222" stroke="#666666" stroke-width="1"/>
<path d="M1274.4 480.85L1264.4 485.85L1274.4 490.85Z" fill="#dddddd"/>
<path d="M1501.4 480.85L1511.4 485.85L1501.4 490.85Z" fill="#dddddd"/>
<text x="1278.4" y="490.3" class="wl">seed</text>
<text x="1482.4" y="490.3" class="wv">523631052279306</text>
<rect x="1258.4" y="499.85" width="259" height="20" rx="10" fill="#222222" stroke="#666666" stroke-width="1"/>
<path d="M1274.4 504.85L1264.4 509.85L1274.4 514.85Z" fill="#dddddd"/>
<path d="M1501.4 504.85L1511.4 509.85L1501.4 514.85Z" fill="#5a5a5a"/>
<text x="1278.4" y="514.3" class="wl">control after generate</text>
<text x="1482.4" y="514.3" class="wv">randomize</text>
<rect x="1258.4" y="523.85" width="259" height="20" rx="10" fill="#222222" stroke="#666666" stroke-width="1"/>
<path d="M1274.4 528.85L1264.4 533.85L1274.4 538.85Z" fill="#dddddd"/>
<path d="M1501.4 528.85L1511.4 533.85L1501.4 538.85Z" fill="#dddddd"/>
<text x="1278.4" y="538.3" class="wl">steps</text>
<text x="1482.4" y="538.3" class="wv">4</text>
<rect x="1258.4" y="547.85" width="259" height="20" rx="10" fill="#222222" stroke="#666666" stroke-width="1"/>
<path d="M1274.4 552.85L1264.4 557.85L1274.4 562.85Z" fill="#dddddd"/>
<path d="M1501.4 552.85L1511.4 557.85L1501.4 562.85Z" fill="#dddddd"/>
<text x="1278.4" y="562.3" class="wl">cfg</text>
<text x="1482.4" y="562.3" class="wv">1.0</text>
<rect x="1258.4" y="571.85" width="259" height="20" rx="10" fill="#222222" stroke="#666666" stroke-width="1"/>
<path d="M1274.4 576.85L1264.4 581.85L1274.4 586.85Z" fill="#5a5a5a"/>
<path d="M1501.4 576.85L1511.4 581.85L1501.4 586.85Z" fill="#dddddd"/>
<text x="1278.4" y="586.3" class="wl">sampler_name</text>
<text x="1482.4" y="586.3" class="wv">euler</text>
<rect x="1258.4" y="595.85" width="259" height="20" rx="10" fill="#222222" stroke="#666666" stroke-width="1"/>
<path d="M1274.4 600.85L1264.4 605.85L1274.4 610.85Z" fill="#5a5a5a"/>
<path d="M1501.4 600.85L1511.4 605.85L1501.4 610.85Z" fill="#dddddd"/>
<text x="1278.4" y="610.3" class="wl">scheduler</text>
<text x="1482.4" y="610.3" class="wv">simple</text>
<rect x="1258.4" y="619.85" width="259" height="20" rx="10" fill="#222222" stroke="#666666" stroke-width="1"/>
<path d="M1274.4 624.85L1264.4 629.85L1274.4 634.85Z" fill="#dddddd"/>
<path d="M1501.4 624.85L1511.4 629.85L1501.4 634.85Z" fill="#5a5a5a"/>
<text x="1278.4" y="634.3" class="wl">denoise</text>
<text x="1482.4" y="634.3" class="wv">1.00</text>
<rect x="1243.4" y="340.3" width="59.4" height="19" rx="3.5" fill="#353535"/>
<text x="1251.4" y="354.1" class="tb" textLength="42.1" lengthAdjust="spacingAndGlyphs">61.768s</text>
<rect x="1504.4" y="339.9" width="27.6" height="20" rx="5" fill="#0f1f0f"/>
<text x="1509.7" y="353.9" class="bd" textLength="14.6" lengthAdjust="spacingAndGlyphs">#6</text>
</g>
<g>
<path d="M108 554.3H366.2A8 8 0 0 1 374.2 562.3V889.8A8 8 0 0 1 366.2 897.8H108A8 8 0 0 1 100 889.8V562.3A8 8 0 0 1 108 554.3Z" fill="#353535" filter="url(#sh)"/>
<path d="M108 554.3H366.2A8 8 0 0 1 374.2 562.3V584.3H100V562.3A8 8 0 0 1 108 554.3Z" fill="#333333"/>
<rect x="100" y="583.7" width="274.2" height="1.2" fill="#000" fill-opacity="0.2"/>
<circle cx="115" cy="569.3" r="5" fill="#6b6b6b"/>
<text x="130" y="574.3" class="tt" fill="#9a9a9a">Load Image</text>
<circle cx="365.2" cy="598.3" r="4" fill="#64B5F6" stroke="#000" stroke-width="1"/>
<text x="355.2" y="602.8" class="sr">IMAGE</text>
<circle cx="365.2" cy="618.3" r="4" fill="#81C784" stroke="#000" stroke-width="1"/>
<text x="355.2" y="622.8" class="sr">MASK</text>
<rect x="115" y="630.3" width="244.2" height="20" rx="10" fill="#222222" stroke="#666666" stroke-width="1"/>
<path d="M131 635.3L121 640.3L131 645.3Z" fill="#dddddd"/>
<path d="M343.2 635.3L353.2 640.3L343.2 645.3Z" fill="#5a5a5a"/>
<text x="135" y="644.3" class="wl">image</text>
<text x="324.2" y="644.3" class="wv">input (1).png</text>
<rect x="115" y="654.3" width="244.2" height="20" fill="#222222" stroke="#666666" stroke-width="1"/>
<text x="237.1" y="668.3" class="wb">choose file to upload</text>
<g transform="translate(135 678.1)">
<use href="#scene"/>
<g clip-path="url(#cScene)">
<path d="M0 175.6Q20 175.6 40 179.6Q75 187.6 100 187.1Q135 185.6 160 173.6Q185 165.6 205 167.6V205H0Z" fill="#d6f5b0"/>
<path d="M0 177.8Q20 177.8 40 181.8Q75 189.8 100 189.3Q135 187.8 160 175.8Q185 167.8 205 169.8V205H0Z" fill="url(#gWave)"/>
</g>
<rect x="9.4" y="9.3" width="16.6" height="6.4" rx="3.2" fill="#ffffff"/>
<text x="17.7" y="14.4" style="font-size:5.2px;font-weight:bold;fill:#6ab53c;text-anchor:middle">9:16</text>
<text x="55.6" y="36.4" style="font-size:18.6px;font-weight:bold;fill:#ffffff" textLength="56" lengthAdjust="spacingAndGlyphs">Spring</text>
<text x="48.6" y="53.4" style="font-size:18.6px;font-weight:bold;fill:#ffffff" textLength="103.4" lengthAdjust="spacingAndGlyphs">Escape Plan</text>
<text x="98.2" y="60.2" style="font-size:5.6px;font-weight:bold;fill:#ffffff" textLength="50.5" lengthAdjust="spacingAndGlyphs">Spark Fresh Vibes.</text>
<path d="M115.5 31.5Q120 26 124 29.5Q128 33 132 28.5Q135 25 139 27M117 27.5L121 25.5M128.5 24L129.5 20M134.5 22.5L137 19.5M121 32.5L125 33" stroke="#ffffff" stroke-width="0.9" fill="none" stroke-linecap="round"/>
<path d="M143.2 23.2L146 24.6L148.6 22.4L148.2 27.2L144 27.4Z" fill="#ffdc3c"/>
<text x="8.6" y="189" style="font-family:'DejaVu Serif','Liberation Serif',serif;font-style:italic;font-size:6.6px;fill:#ffffff" textLength="58.5" lengthAdjust="spacingAndGlyphs">Pack Your in Bag,</text>
<text x="8.6" y="198.3" style="font-family:'DejaVu Serif','Liberation Serif',serif;font-style:italic;font-size:6.6px;fill:#ffffff" textLength="58.5" lengthAdjust="spacingAndGlyphs">Sow into Joy Life</text>
<text x="198.3" y="187" style="font-size:4.8px;font-weight:bold;fill:#ffffff;text-anchor:end">4.10-4.30</text>
<text x="198.3" y="192.9" style="font-size:4.6px;font-weight:bold;fill:#ffffff;text-anchor:end">Check at In's</text>
<text x="198.3" y="198.4" style="font-size:4.6px;font-weight:bold;fill:#ffffff;text-anchor:end">Spring Paradise</text>
</g>
<text x="237.1" y="893" class="cap" textLength="58" lengthAdjust="spacingAndGlyphs">1328 × 1328</text>
<rect x="100" y="534.3" width="51.7" height="19" rx="3.5" fill="#353535"/>
<text x="108" y="548.1" class="tb" textLength="34.4" lengthAdjust="spacingAndGlyphs">0.055s</text>
<rect x="339.8" y="533.9" width="34" height="20" rx="5" fill="#0f1f0f"/>
<text x="345.1" y="547.9" class="bd" textLength="21" lengthAdjust="spacingAndGlyphs">#13</text>
</g>
<g>
<path d="M419.3 547.6H673.3A8 8 0 0 1 681.3 555.6V651.2A8 8 0 0 1 673.3 659.2H419.3A8 8 0 0 1 411.3 651.2V555.6A8 8 0 0 1 419.3 547.6Z" fill="#353535" filter="url(#sh)"/>
<path d="M419.3 547.6H673.3A8 8 0 0 1 681.3 555.6V577.6H411.3V555.6A8 8 0 0 1 419.3 547.6Z" fill="#333333"/>
<rect x="411.3" y="577" width="270" height="1.2" fill="#000" fill-opacity="0.2"/>
<circle cx="426.3" cy="562.6" r="5" fill="#6b6b6b"/>
<text x="441.3" y="567.6" class="tt" fill="#9a9a9a">Scale Image to Total Pixels</text>
<circle cx="421.3" cy="591.6" r="4" fill="#64B5F6"/>
<text x="431.3" y="596.1" class="sl">image</text>
<circle cx="672.3" cy="591.6" r="4" fill="#64B5F6" stroke="#000" stroke-width="1"/>
<text x="662.3" y="596.1" class="sr">IMAGE</text>
<rect x="426.3" y="603.6" width="240" height="20" rx="10" fill="#222222" stroke="#666666" stroke-width="1"/>
<path d="M442.3 608.6L432.3 613.6L442.3 618.6Z" fill="#dddddd"/>
<path d="M650.3 608.6L660.3 613.6L650.3 618.6Z" fill="#5a5a5a"/>
<text x="446.3" y="617.6" class="wl">upscale_method</text>
<text x="631.3" y="617.6" class="wv">lanczos</text>
<rect x="426.3" y="627.6" width="240" height="20" rx="10" fill="#222222" stroke="#666666" stroke-width="1"/>
<path d="M442.3 632.6L432.3 637.6L442.3 642.6Z" fill="#dddddd"/>
<path d="M650.3 632.6L660.3 637.6L650.3 642.6Z" fill="#dddddd"/>
<text x="446.3" y="641.6" class="wl">megapixels</text>
<text x="631.3" y="641.6" class="wv">1.00</text>
<rect x="411.3" y="527.6" width="51.7" height="19" rx="3.5" fill="#353535"/>
<text x="419.3" y="541.4" class="tb" textLength="34.4" lengthAdjust="spacingAndGlyphs">0.067s</text>
<rect x="653.3" y="527.2" width="27.6" height="20" rx="5" fill="#0f1f0f"/>
<text x="658.6" y="541.2" class="bd" textLength="14.6" lengthAdjust="spacingAndGlyphs">#5</text>
</g>
<g>
<path d="M881.1 672.4H1005.7A8 8 0 0 1 1013.7 680.4V740.6A8 8 0 0 1 1005.7 748.6H881.1A8 8 0 0 1 873.1 740.6V680.4A8 8 0 0 1 881.1 672.4Z" fill="#353535" filter="url(#sh)"/>
<path d="M881.1 672.4H1005.7A8 8 0 0 1 1013.7 680.4V702.4H873.1V680.4A8 8 0 0 1 881.1 672.4Z" fill="#333333"/>
<rect x="873.1" y="701.8" width="140.6" height="1.2" fill="#000" fill-opacity="0.2"/>
<circle cx="888.1" cy="687.4" r="5" fill="#6b6b6b"/>
<text x="903.1" y="692.4" class="tt" fill="#9a9a9a">VAE Encode</text>
<circle cx="883.1" cy="716.4" r="4" fill="#64B5F6"/>
<text x="893.1" y="720.9" class="sl">pixels</text>
<circle cx="883.1" cy="736.4" r="4" fill="#FF6E6E"/>
<text x="893.1" y="740.9" class="sl">vae</text>
<circle cx="1004.7" cy="716.4" r="4" fill="#FF9CF9" stroke="#000" stroke-width="1"/>
<text x="994.7" y="720.9" class="sr">LATENT</text>
<rect x="873.1" y="652.4" width="51.7" height="19" rx="3.5" fill="#353535"/>
<text x="881.1" y="666.2" class="tb" textLength="34.4" lengthAdjust="spacingAndGlyphs">0.895s</text>
<rect x="985.7" y="652" width="27.6" height="20" rx="5" fill="#0f1f0f"/>
<text x="991" y="666" class="bd" textLength="14.6" lengthAdjust="spacingAndGlyphs">#4</text>
</g>
<g>
<path d="M1261.1 687.1H1526.9A8 8 0 0 1 1534.9 695.1V858.9A8 8 0 0 1 1526.9 866.9H1261.1A8 8 0 0 1 1253.1 858.9V695.1A8 8 0 0 1 1261.1 687.1Z" fill="#665533" filter="url(#sh)"/>
<path d="M1261.1 687.1H1526.9A8 8 0 0 1 1534.9 695.1V717.1H1253.1V695.1A8 8 0 0 1 1261.1 687.1Z" fill="#443322"/>
<rect x="1253.1" y="716.5" width="281.8" height="1.2" fill="#000" fill-opacity="0.2"/>
<circle cx="1268.1" cy="702.1" r="5" fill="#6b6b6b"/>
<text x="1283.1" y="707.1" class="tt" fill="#9a9a9a">KSampler settings</text>
</g>
<g>
<rect x="1626.6" y="266.5" width="238.1" height="287.9" rx="14.5" fill="none" stroke="#f4f4f4" stroke-width="1.1"/>
<path d="M1640.7 273.2H1850.9A8 8 0 0 1 1858.9 281.2V540.2A8 8 0 0 1 1850.9 548.2H1640.7A8 8 0 0 1 1632.7 540.2V281.2A8 8 0 0 1 1640.7 273.2Z" fill="#353535" filter="url(#sh)"/>
<path d="M1640.7 273.2H1850.9A8 8 0 0 1 1858.9 281.2V303.2H1632.7V281.2A8 8 0 0 1 1640.7 273.2Z" fill="#333333"/>
<rect x="1632.7" y="302.6" width="226.2" height="1.2" fill="#000" fill-opacity="0.2"/>
<circle cx="1647.7" cy="288.2" r="5" fill="#6b6b6b"/>
<text x="1662.7" y="293.2" class="tt" fill="#ffffff">Preview Image</text>
<circle cx="1642.7" cy="317.2" r="4" fill="#64B5F6"/>
<text x="1652.7" y="321.7" class="sl">images</text>
<g transform="translate(1643 328.7)">
<use href="#scene"/>
</g>
<text x="1745.8" y="544" class="cap" textLength="58" lengthAdjust="spacingAndGlyphs">1024 × 1024</text>
<rect x="1632.7" y="253.2" width="51.7" height="19" rx="3.5" fill="#353535"/>
<text x="1640.7" y="267" class="tb" textLength="34.4" lengthAdjust="spacingAndGlyphs">0.386s</text>
<rect x="1830.9" y="252.8" width="27.6" height="20" rx="5" fill="#0f1f0f"/>
<text x="1836.2" y="266.8" class="bd" textLength="14.6" lengthAdjust="spacingAndGlyphs">#8</text>
</g>
<text x="15" y="697.4" class="st">T: 0.00s</text>
<text x="15" y="710.4" class="st">I: 0</text>
<text x="15" y="723.4" class="st">N: 15 [15]</text>
<text x="15" y="736.4" class="st">V: 31</text>
<text x="15" y="749.4" class="st">FPS:144.93</text>
</svg></body></html>
